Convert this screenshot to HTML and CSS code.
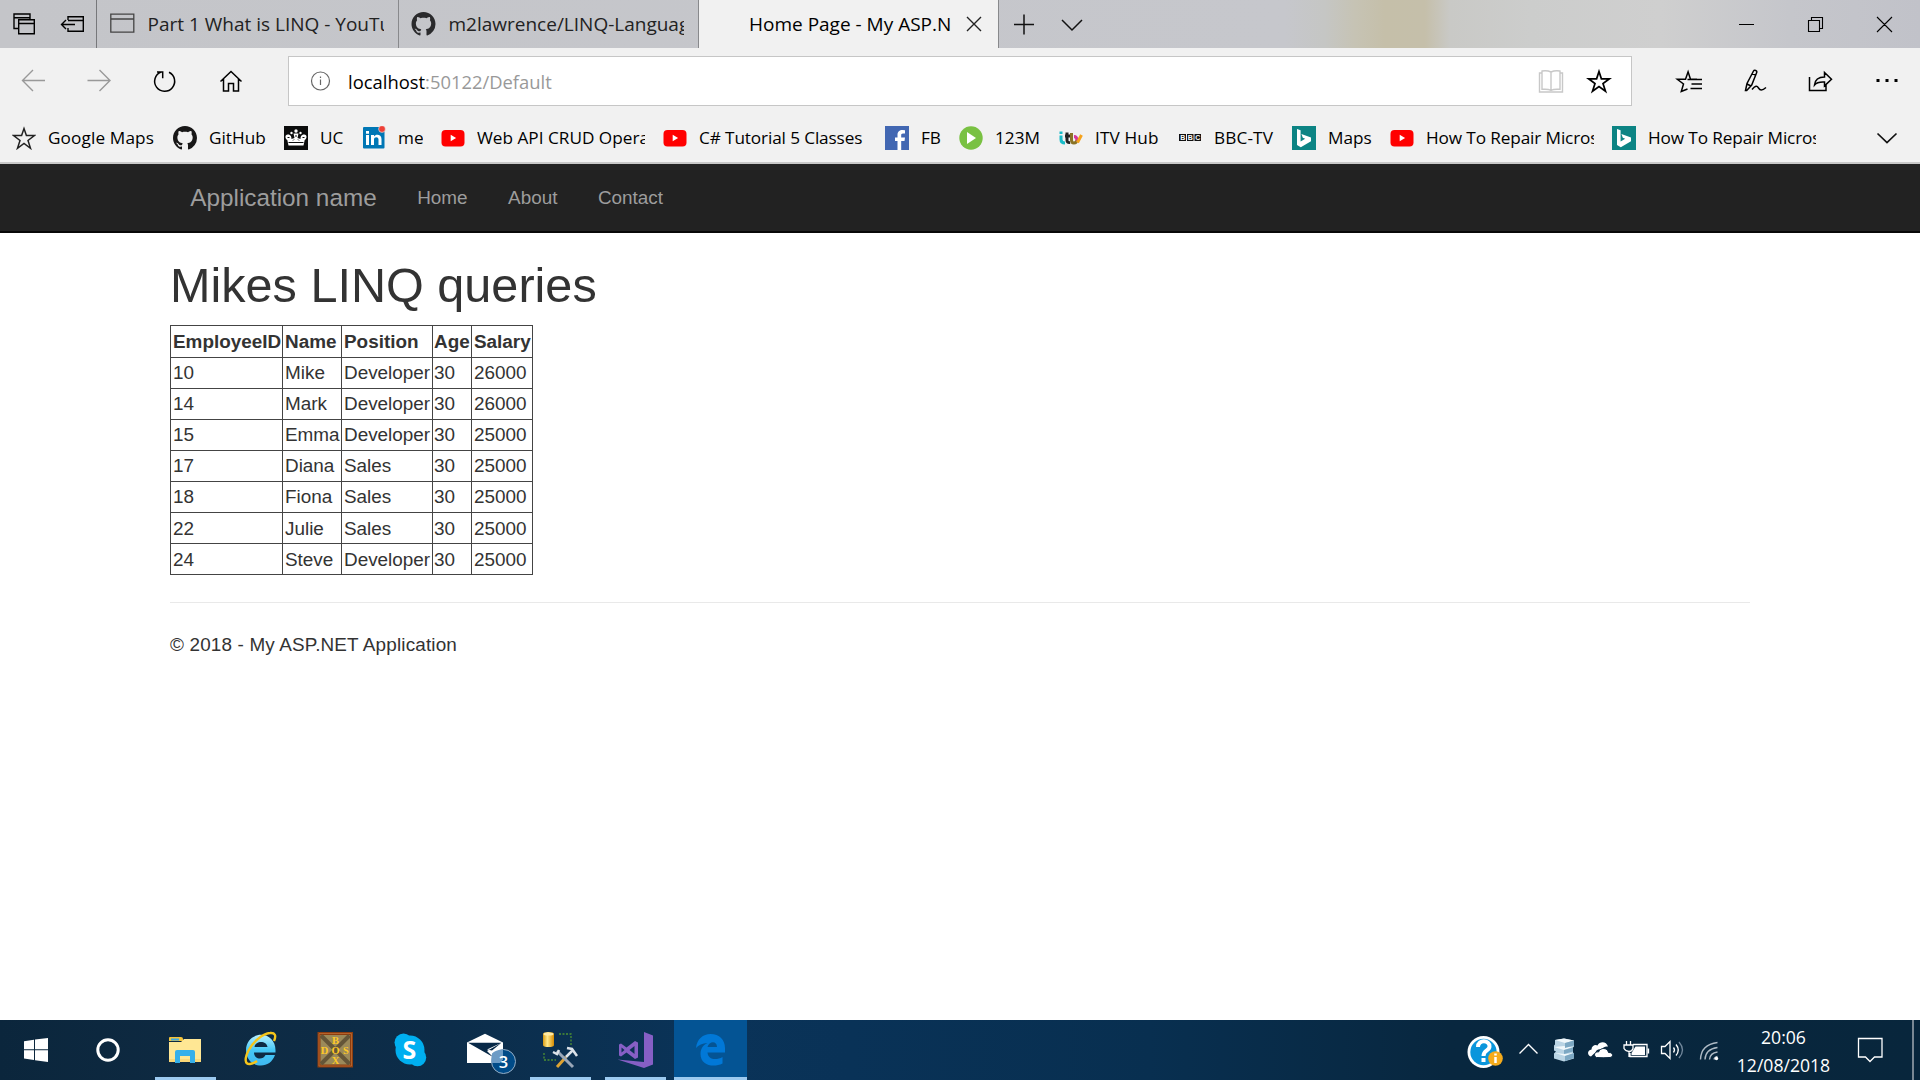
FILE: index.html
```html
<!DOCTYPE html>
<html lang="en">
<head>
<meta charset="utf-8">
<title>Home Page - My ASP.NET Application</title>
<link rel="stylesheet" href="styles.css">
</head>
<body>
<svg class="defs" width="0" height="0">
  <symbol id="github" viewBox="0 0 16 16"><path d="M8 0C3.58 0 0 3.58 0 8c0 3.54 2.29 6.53 5.47 7.59.4.07.55-.17.55-.38 0-.19-.01-.82-.01-1.49-2.01.37-2.53-.49-2.69-.94-.09-.23-.48-.94-.82-1.13-.28-.15-.68-.52-.01-.53.63-.01 1.08.58 1.23.82.72 1.21 1.87.87 2.33.66.07-.52.28-.87.51-1.07-1.78-.2-3.64-.89-3.64-3.95 0-.87.31-1.59.82-2.15-.08-.2-.36-1.02.08-2.12 0 0 .67-.21 2.2.82.64-.18 1.32-.27 2-.27.68 0 1.36.09 2 .27 1.53-1.04 2.2-.82 2.2-.82.44 1.1.16 1.92.08 2.12.51.56.82 1.27.82 2.15 0 3.07-1.87 3.75-3.65 3.95.29.25.54.73.54 1.48 0 1.07-.01 1.93-.01 2.2 0 .21.15.46.55.38A8.013 8.013 0 0016 8c0-4.42-3.58-8-8-8z"/></symbol>
  <symbol id="youtube" viewBox="0 0 24 24"><rect x=".5" y="4" width="23" height="16.5" rx="4" fill="#f00"/><path d="M9.7 8.8v6.4l5.4-3.2z" fill="#fff"/></symbol>
  <symbol id="bing" viewBox="0 0 24 24"><path fill="#0c8484" d="M0 0h24v24H0z"/><path fill="#fff" d="M5 3l3.600 1.300v11.200l4.600-2.700-2.400-1.100-1.400-3.600 9.600 3.400v3.800l-10.200 6L5 18.900z"/></symbol>
</svg>

<header class="tabstrip">
  <div class="tabtools">
    <svg width="96" height="48" fill="none" stroke="#000" stroke-width="1.4"><path d="M18 28.5h-4V14h16v5M14 17.8h16M18.7 19.7h15.6v14H18.7zM18.7 23.5h15.6"/><path d="M68 20v-3.3h15.3v14.600H68V28M68 20.500h15.500M61.500 24.500H75M66 20l-4.500 4.500L66 29"/></svg>
  </div>
  <div class="tab">
    <svg width="25" height="24" fill="none" stroke="#444" stroke-width="1.300"><path d="M.8 2.200h23v18H.8zM.8 7h23"/></svg>
    <span class="tab-title">Part 1 What is LINQ - YouTu</span>
  </div>
  <div class="tab">
    <svg width="25" height="24" fill="#2a2a2c"><use href="#github"/></svg>
    <span class="tab-title">m2lawrence/LINQ-Languag</span>
  </div>
  <div class="tab active">
    <span class="tab-title">Home Page - My ASP.N</span>
    <svg width="16" height="16" stroke="#222" stroke-width="1.400"><path d="M1 1l14 14M15 1L1 15"/></svg>
  </div>
  <svg width="100" height="48" fill="none" stroke="#111" stroke-width="1.500"><path d="M15 24.500h20M25 14.500v20M63 20l10 10 10-10"/></svg>
  <svg class="window-buttons" width="207" height="48" fill="none" stroke="#000" stroke-width="1.100"><path d="M26 24.500h15M95.500 20.500h11v11h-11zM98.500 20v-2.500h11v11H107M164 17l15 15M179 17l-15 15"/></svg>
</header>

<div class="toolbar">
  <svg class="nav-icons" width="288" height="64" fill="none" stroke-width="1.400"><path stroke="#999" d="M22.500 32.500H45M33 22L22.500 32.500 33 43M87.500 32.500H110M99.500 22L110 32.500 99.500 43"/><path stroke="#000" stroke-width="1.500" d="M169 24.300a10 10 0 1 1-8-.3M157 24h5.700v6.300M220.500 33.500L231 23.500l10.500 10M223.500 31v12h5v-7.500h5V43h5V31"/></svg>
  <div class="address">
    <svg width="24" height="24" fill="none" stroke="#666" stroke-width="1.200"><circle cx="11.500" cy="12" r="9"/><path d="M11.500 10.500v5.500M11.500 7.500v1.500"/></svg>
    <span class="url">localhost<i>:50122/Default</i></span>
    <svg class="address-actions" width="100" height="48" fill="none"><path stroke="#c8c8c8" stroke-width="1.400" d="M20 33.300c-3-1.500-6-1-9-1V14c3-.5 6-.5 9 1 3-1.500 6-1.500 9-1v18.300c-3 0-6-.5-9 1zM20 15v18M11 16H8.500v19h23V16H29"/><path stroke="#000" stroke-width="1.700" d="M68 14.500l2.400 7.300h8L72 26.500l2.500 7.800L68 29.500l-6.500 4.800L64 26.500l-6.400-4.700h8z"/></svg>
  </div>
  <svg width="288" height="64" fill="none" stroke="#000" stroke-width="1.500"><path d="M55.500 41l-6.200 2.500L51.500 36l-6.200-4.700h8.200l2.600-7.500 2.400 7.500h6.500M55.500 31.400H70M59.500 36H70M58.500 40.500H70"/><path d="M113.500 42.500l1.500-7 6.500-12.500c.8-1.500 4-.5 3.200 1.500l-5 12.500-5 5.500zM120 25.500l3.500 1.500M115 36l4 2M120 41.500c3.500-4 5-4 6.500-1.500s3.500 3 7.500-.5"/><path d="M177.500 29v13.500H194V36M182.500 37c.5-5 3.500-8 10-8v-4.500l7 6.700-7 6.700V34c-5-.3-8 .5-10 3z"/><path fill="#000" stroke="none" d="M244.500 31h3v3h-3zM253.500 31h3v3h-3zM262.500 31h3v3h-3z"/></svg>
</div>

<nav class="favorites">
  <div class="fav w161"><svg width="24" height="24" fill="none" stroke="#222" stroke-width="1.500"><path d="M12 2.500l2.400 7h8l-6.400 5 2.500 7.800L12 17.500l-6.500 4.800L8 14.500 1.600 9.500h8z"/></svg><span class="wide">Google Maps</span></div>
  <div class="fav w111"><svg width="24" height="24" fill="#181717"><use href="#github"/></svg><span>GitHub</span></div>
  <div class="fav w78"><svg width="24" height="24"><path d="M0 0h24v24H0z" fill="#0b0c0c"/><g fill="#fff"><path d="M4.500 19.500L3.300 14C1 13 .5 8.500 3.800 8.500 7 8.500 7.500 11 7.500 13l3-1-1-4.500h5l-1 4.500 3 1c0-2 .5-4.500 3.700-4.500 3.300 0 2.800 4.500.5 5.500l-1.200 5.500z"/><circle cx="12" cy="5" r="1.700"/><circle cx="7.500" cy="7" r="1.200"/><circle cx="16.500" cy="7" r="1.200"/></g><path stroke="#0b0c0c" fill="none" d="M4.500 16.500h15M3.500 11.500h2M18.500 11.500h2M11 10h2M9 14.500l1-1M15 14.500l-1-1"/></svg><span>UC</span></div>
  <div class="fav w79"><svg width="24" height="24"><rect x="1" y="1" width="21.500" height="21.500" rx="1" fill="#0077b5"/><path fill="#fff" d="M4 9h3v10H4zM4 5h3v2.800H4zM9 9h3v1.500c2-2.800 7.500-2 7.500 2.500v6h-3v-5.500c0-3-4.500-3-4.500 0V19H9z"/><circle cx="20" cy="3" r="3.400" fill="#ee4036" stroke="#f1f1f1" stroke-width=".6"/></svg><span>me</span></div>
  <div class="fav w222"><svg width="24" height="24"><use href="#youtube"/></svg><span>Web API CRUD Opera</span></div>
  <div class="fav w222"><svg width="24" height="24"><use href="#youtube"/></svg><span class="narrow">C# Tutorial 5 Classes</span></div>
  <div class="fav w74"><svg width="24" height="24"><path d="M0 0h24v24H0z" fill="#4267b2"/><path fill="#fff" d="M12.500 24v-9H10v-3.500h2.500V9c0-3.500 2-5 5-5l2.500.2v3.300h-2c-1.500 0-1.800.7-1.800 1.800v2.200H20l-.5 3.500h-3.300v9z"/></svg><span>FB</span></div>
  <div class="fav w100"><svg width="24" height="24"><circle cx="12" cy="12" r="11.700" fill="#79c142"/><path fill="#fff" d="M8 6l9 6-9 6z"/></svg><span>123M</span></div>
  <div class="fav w119"><svg width="24" height="24" fill="none" stroke-width="3"><path stroke="#19bcc9" d="M2 9.500v4q0 3.500 4 3.500M2 5.500V8"/><path stroke="#222" d="M8 6.500V14q0 3 3 2.500M6 10h5"/><path stroke="#8a7325" d="M12.500 7v7q0 3 2.500 3t3-3"/><path stroke="#d5379b" d="M15 10.500q3 0 3 4"/><path stroke="#f6a21b" d="M18.500 16.500L22.500 9"/></svg><span class="wide">ITV Hub</span></div>
  <div class="fav w114"><svg width="24" height="24"><path d="M1 8h7v7H1zM9 8h6.500v7H9zM16.500 8H23v7h-6.500z" fill="#111"/><g class="bbc" fill="#fff"><text x="2.200" y="14">B</text><text x="9.800" y="14">B</text><text x="17.200" y="14">C</text></g></svg><span class="wide">BBC-TV</span></div>
  <div class="fav w98"><svg width="24" height="24"><use href="#bing"/></svg><span>Maps</span></div>
  <div class="fav w222"><svg width="24" height="24"><use href="#youtube"/></svg><span class="narrow">How To Repair Micros</span></div>
  <div class="fav w222"><svg width="24" height="24"><use href="#bing"/></svg><span class="narrow">How To Repair Micros</span></div>
  <svg class="more" width="22" height="24" fill="none" stroke="#111" stroke-width="1.700"><path d="M1.500 7.500l9.500 9 9.500-9"/></svg>
</nav>

<div class="navbar">
  <a class="brand">Application name</a>
  <a>Home</a>
  <a>About</a>
  <a>Contact</a>
</div>

<main class="content">
  <h1>Mikes LINQ queries</h1>
  <table>
    <colgroup><col class="c1"><col class="c2"><col class="c3"><col class="c4"><col class="c5"></colgroup>
    <tr><th>EmployeeID</th><th>Name</th><th>Position</th><th>Age</th><th>Salary</th></tr>
    <tr><td>10</td><td>Mike</td><td>Developer</td><td>30</td><td>26000</td></tr>
    <tr><td>14</td><td>Mark</td><td>Developer</td><td>30</td><td>26000</td></tr>
    <tr><td>15</td><td>Emma</td><td>Developer</td><td>30</td><td>25000</td></tr>
    <tr><td>17</td><td>Diana</td><td>Sales</td><td>30</td><td>25000</td></tr>
    <tr><td>18</td><td>Fiona</td><td>Sales</td><td>30</td><td>25000</td></tr>
    <tr class="low"><td>22</td><td>Julie</td><td>Sales</td><td>30</td><td>25000</td></tr>
    <tr class="low"><td>24</td><td>Steve</td><td>Developer</td><td>30</td><td>25000</td></tr>
  </table>
  <hr>
  <footer>© 2018 - My ASP.NET Application</footer>
</main>

<div class="taskbar">
  <svg width="72" height="60" fill="#fff"><path d="M24 21.200l10-1.500v9.600H24zM35 19.500L48 18v11.300H35zM24 30.300h10V40l-10-1.500zM35 30.300h13V42l-13-1.800z"/></svg>
  <svg width="76" height="60" fill="none" stroke="#fff" stroke-width="3"><circle cx="36" cy="30" r="10.200"/></svg>
  <div class="app running"><svg width="75" height="60"><path fill="#f5c43a" d="M21 18q0-1 1-1h11q2 0 2 2v2H21z"/><path fill="#3ea9e0" d="M23 18.500h8v2h-8z"/><path fill="#ffe794" d="M21 22h12l3-3h17v23H21z"/><path fill="#fbd877" d="M21 39h32v3H21z"/><path fill="#36b0ea" d="M27 43V32q0-2 2-2h16q2 0 2 2v11h-5v-7H32v7z"/></svg></div>
  <div class="app"><svg width="75" height="60"><defs><linearGradient id="ie" x2="0" y2="1"><stop stop-color="#b9f0ff"/><stop offset=".5" stop-color="#45c8f7"/><stop offset="1" stop-color="#3fb8f0"/></linearGradient></defs><g transform="translate(-2 0)"><path fill="url(#ie)" fill-rule="evenodd" d="M54.500 32.500H33c0 7 9 8 11.500 2.500H54C51.500 42 46 45.500 40 45.500 31 45.500 25 39 25 30s7-15.200 15-15.200S54.500 21 54.500 30zM33.500 27h13c-.5-6.500-12-7-13 0z"/><path fill="none" stroke="#f6c51b" stroke-width="2.400" d="M53 21c2.500-5.500 1-8.500-4-8-7 .5-17 8.500-21.500 17.500-4 8-4 14 1.500 13.500 2.500-.3 5-1.500 7-3"/></g></svg></div>
  <div class="app"><svg width="75" height="60"><path fill="#8b3d10" d="M19.500 12h35.500v35.500H19.500z"/><path fill="#9b8a5a" d="M22.500 15h29.500v29.500H22.500z"/><path stroke="#655638" stroke-width="4" d="M23 15.500l28.500 28.500M51.500 15.500L23 44"/><path fill="none" stroke="#b5622a" d="M21 13.500h32.500v32.500H21z"/><g class="dos" fill="#ffc926"><text x="37.500" y="23.500">B</text><text x="26.500" y="33.500">D</text><text x="37.500" y="33.500">O</text><text x="48" y="33.500">S</text><text x="37.500" y="44">X</text></g></svg></div>
  <div class="app"><svg width="75" height="60" fill="#00aff0"><circle cx="37" cy="30" r="14.500"/><circle cx="30.500" cy="22.500" r="9"/><circle cx="44.500" cy="37.500" r="8.700"/><text class="skype" x="36.500" y="39" fill="#fff">S</text></svg></div>
  <div class="app"><svg width="75" height="60"><path fill="#fff" d="M19 22.500l18-8.700 18 8.700V43H19z"/><path fill="#082947" d="M20 22.700h33.500L39 31l6 6zM44 30.500l9.500-7.800L39 29.500z"/><circle cx="55.500" cy="41.500" r="12" fill="#004b88" stroke="#94aec6"/><path fill="#6c9bc5" d="M44 33.500q3-3.500 11-4v10l-3 3.500H44q-1-5 0-9.500z"/><text class="badge" x="55.500" y="48" fill="#fff">3</text></svg></div>
  <div class="app running"><svg width="75" height="60"><defs><linearGradient id="cyl"><stop stop-color="#d89a13"/><stop offset=".4" stop-color="#ffe889"/><stop offset="1" stop-color="#d88b00"/></linearGradient></defs><path fill="url(#cyl)" d="M20 14q0-2 5.500-2t5.500 2v11q0 2-5.500 2T20 25z"/><ellipse cx="25.500" cy="14" rx="5" ry="1.500" fill="#ffeaa5"/><path fill="none" stroke="#4d9133" stroke-width="1.300" stroke-dasharray="2 1.500" d="M36 14h12v11M21 33v7h12"/><path stroke="#dea332" stroke-width="3" d="M34 47l9-10"/><path stroke="#9aa7b8" stroke-width="3" d="M34 31l16 16"/><path stroke="#dce2e9" stroke-width="2.500" fill="none" d="M30 32l4 2 2-4M43 37l6-6M44 28l5 1 5 7"/></svg></div>
  <div class="app running"><svg width="75" height="60" fill="#865fc5"><path fill-rule="evenodd" d="M21 24.500l2-1 5.500 4 8.500-6.500 3 1.500v15l-3 1.500-8.500-6.500-5.500 4-2-1zM23.500 27.500v5l3-2.500zM31.500 30l5 4v-8z"/><path d="M46 12l9 3.500v29L46 48l-26.500-8.500L46 42z"/></svg></div>
  <div class="app running selected"><svg width="73" height="60"><path fill="#0178d7" d="M22 28c1-9 7-14 14.500-14 9 0 14.500 6 14.500 14v4.500H33.500c.5 7.500 9 8 15 4.500v6.500c-9 4.500-22 2-22-9.500 0-6 3.500-9.500 7-11-5 .5-9 2-11.500 5zM33.500 27H43c0-6.500-8-6-9.500 0z"/></svg></div>
  <div class="tray">
    <svg width="44" height="60"><circle cx="17.500" cy="32" r="16" fill="#fff"/><circle cx="17.500" cy="32" r="13.200" fill="#0a96dc"/><path fill="none" stroke="#fff" stroke-width="4" d="M12 27c0-8 12-7 11.500-.5C23.500 31 17.500 30 17.500 36M17.500 38v4"/><circle cx="29.500" cy="38.500" r="7.300" fill="#f5ab1c"/><path stroke="#fff" stroke-width="2.500" d="M29.500 37v6M29.500 33.500v2"/></svg>
    <svg width="36" height="60" fill="none" stroke="#fff" stroke-width="1.400"><path d="M9.500 33.500l9-9 9 9"/></svg>
    <svg width="36" height="60"><path fill="#b9d4e4" d="M9 20l9-1.500 10 2v6l-1 1v5l1 1v5l-10 3-10-3v-5l2-2-2-1v-5l1-1z"/><path fill="#f0f8fb" d="M9 20l9-1.500 10 2-9 2.500zM8 27l10-1 8 1.500-8 2.500zM9 33l10 1 9-1-9 3z"/><path fill="#7ca8c3" d="M19 23l9-2.500v5L19 28zM18 30l9-2.500v4L18 34zM19 36l9-3v5l-9 3z"/></svg>
    <svg width="36" height="60"><path fill="#fff" d="M9 36.500c-4-1-4-6.500.5-7 0-4 4-5.500 6-4 2-4.500 9-4.500 10.500 1-3-.5-5.500 1-6.500 3-3-1-6 1-6 3.500-2 .5-3 2-4.500 3.500z"/><path fill="#fff" stroke="#0a273f" d="M14.500 37.500c-3.500-1.500-2-6.500 2-5.500 2-5 9-4.500 10 .5 4.500-.5 5.500 4.500 1.500 5q-7 .5-13.500 0z"/></svg>
    <svg width="36" height="60" fill="none" stroke="#fff" stroke-width="1.300"><path d="M15 24.500h14V36.500H12V33M30.500 28.500v5M8.500 21v4M12.500 21v4M6 25h9v3.500q-1 3-4 3T6 28.500zM11 31v6"/><path fill="#fff" stroke="none" d="M17.500 26.500h9.500V35H13.500v-2z"/></svg>
    <svg width="36" height="60" fill="none" stroke="#fff" stroke-width="1.300"><path d="M7.500 26.500h3.500l5-5v17l-5-5H7.500zM19.500 27.500q2 2.500 0 5M22 24.500q4.500 5.500 0 11"/><path stroke="#70869a" d="M25 22q7 8 0 16"/></svg>
    <svg width="40" height="60" fill="none" stroke="#aebac5" stroke-width="1.400"><path d="M10.500 39.500q.5-15 17-17M15 39.500q.5-10.500 12.500-12M19.500 39.500q.5-6.500 8-7.500M24 39.500q.5-2.500 3.500-3"/><circle cx="26.500" cy="38.500" r="1.700" fill="#fff" stroke="none"/></svg>
    <div class="clock"><span class="time">20:06</span><span class="date">12/08/2018</span></div>
    <svg width="75" height="60" fill="none" stroke="#fff" stroke-width="1.300"><path d="M21.500 18.500h23.500v18.500h-7.500l-4.500 4.500-4.500-4.500h-7z"/></svg>
    <div class="peek"></div>
  </div>
</div>
</body>
</html>
```
FILE: styles.css
```css
* { box-sizing: border-box; }
html, body { height: 100%; }
body {
  margin: 0;
  display: flex;
  flex-direction: column;
  overflow: hidden;
  background: #fff;
  color: #333;
  font-family: "Liberation Sans", Arial, sans-serif;
  font-size: 18.9px;
}
svg { display: block; flex: none; }
.defs { position: absolute; }

.tabstrip, .toolbar, .favorites, .taskbar, .address {
  display: flex;
  align-items: center;
  flex: none;
  font-family: "Open Sans", "Noto Sans", sans-serif;
}
.tabstrip {
  height: 48px;
  background: linear-gradient(90deg, #c4c5c9 0, #c6c7cc 1285px, #c5c6c4 1325px, #c6c3b4 1355px, #c5bfa9 1385px, #c5bfaa 1425px, #c9c9c6 1450px, #cccdcc 1530px, #cfcfcf 1660px, #c5c6cb 1790px, #c1c2c9 1920px);
}
.tabtools { width: 97px; border-right: 1px solid #77787b; }
.tab {
  display: flex;
  align-items: center;
  width: 302px;
  height: 48px;
  padding: 0 14px 0 13px;
  border-right: 1px solid #88898c;
  color: #222;
  font-size: 19px;
}
.tab + .tab { width: 300px; padding-left: 12px; }
.tab svg { margin-right: 12.5px; }
.tab-title { flex: 1; white-space: nowrap; overflow: hidden; line-height: 48px; }
.tab.active { background: #f1f1f1; color: #000; padding-left: 50px; padding-right: 16px; }
.tab.active .tab-title { flex: 0 0 204px; margin-right: 13px; }
.tab.active svg { margin: 0; }
.window-buttons { margin-left: auto; }

.toolbar { height: 64px; background: #f1f1f1; align-items: flex-start; }
.nav-icons { width: 288px; }
.address {
  width: 1344px;
  height: 50px;
  margin-top: 8px;
  padding-left: 20px;
  background: #fff;
  border: 1px solid #c6c6c6;
}
.url { margin-left: 15px; color: #000; font-size: 18.4px; }
.url i { color: #999; font-style: normal; }
.address-actions { margin-left: auto; }

.favorites {
  height: 52px;
  padding: 2px 22px 0 12px;
  background: #f1f1f1;
  border-bottom: 2px solid #c8c8c8;
  color: #000;
  font-size: 17.2px;
}
.fav { display: flex; align-items: center; gap: 12px; padding-right: 18px; flex: none; }
.fav span { flex: 1; overflow: hidden; white-space: nowrap; line-height: 30px; }
.fav .wide { letter-spacing: .12px; }
.fav .narrow { letter-spacing: -.12px; }
.w161 { width: 161px; }
.w111 { width: 111px; }
.w78 { width: 78px; }
.w79 { width: 79px; }
.w222 { width: 222px; }
.w74 { width: 74px; }
.w100 { width: 100px; }
.w119 { width: 119px; }
.w114 { width: 114px; }
.w98 { width: 98px; }
.more { margin-left: auto; }
.bbc { font: bold 7px "Liberation Sans", sans-serif; }

.navbar {
  display: flex;
  align-items: center;
  flex: none;
  height: 69px;
  padding: 0 170px;
  background: #222;
  border-bottom: 2px solid #080808;
  color: #9d9d9d;
}
.navbar a { padding: 0 20.25px; }
.brand { font-size: 24.3px; }

.content { flex: 1; padding: 0 170px; }
h1 { margin: 25px 0 13px; font-size: 48.6px; font-weight: 400; line-height: 54px; }
table { border-collapse: collapse; table-layout: fixed; width: 363px; }
.c1 { width: 112px; }
.c2 { width: 59px; }
.c3 { width: 91px; }
.c4 { width: 39px; }
.c5 { width: 61px; }
th, td {
  height: 31px;
  padding: 0 0 0 2px;
  border: 1px solid #444;
  line-height: 26px;
  text-align: left;
  white-space: nowrap;
}
th { height: 32px; }
.low td { line-height: 27px; }
th:nth-child(4), td:nth-child(4) { padding-left: 1px; }
hr { margin: 27px 0 28px; border: 0; border-top: 1px solid #e9e9e9; }
footer { line-height: 27px; letter-spacing: .16px; }

.taskbar {
  height: 60px;
  background: linear-gradient(90deg, #0b263c 0, #0e2a42 200px, #0c2d4a 450px, #0a3358 700px, #093257 850px, #082f50 1150px, #08273f 1450px, #08263c 1920px);
}
.app { width: 75px; height: 60px; position: relative; }
.running::after {
  content: "";
  position: absolute;
  left: 7px;
  bottom: 0;
  width: 61px;
  height: 3px;
  background: #9ccaf0;
}
.selected { width: 73px; margin-left: 1px; background: #045494; }
.selected::after { left: 0; width: 73px; }
.app text { text-anchor: middle; }
.dos { font: bold 10.5px "Liberation Serif", serif; }
.skype { font: bold 25px "Open Sans", sans-serif; }
.badge { font: 600 16.5px "Open Sans", sans-serif; }
.tray { display: flex; align-items: center; margin-left: auto; height: 60px; }
.clock {
  display: flex;
  flex-direction: column;
  align-items: center;
  width: 107px;
  padding-top: 1px;
  color: #fff;
  font-size: 17.6px;
  line-height: 28px;
}
.peek { width: 8px; height: 60px; border-left: 2px solid #7a8894; }
```
